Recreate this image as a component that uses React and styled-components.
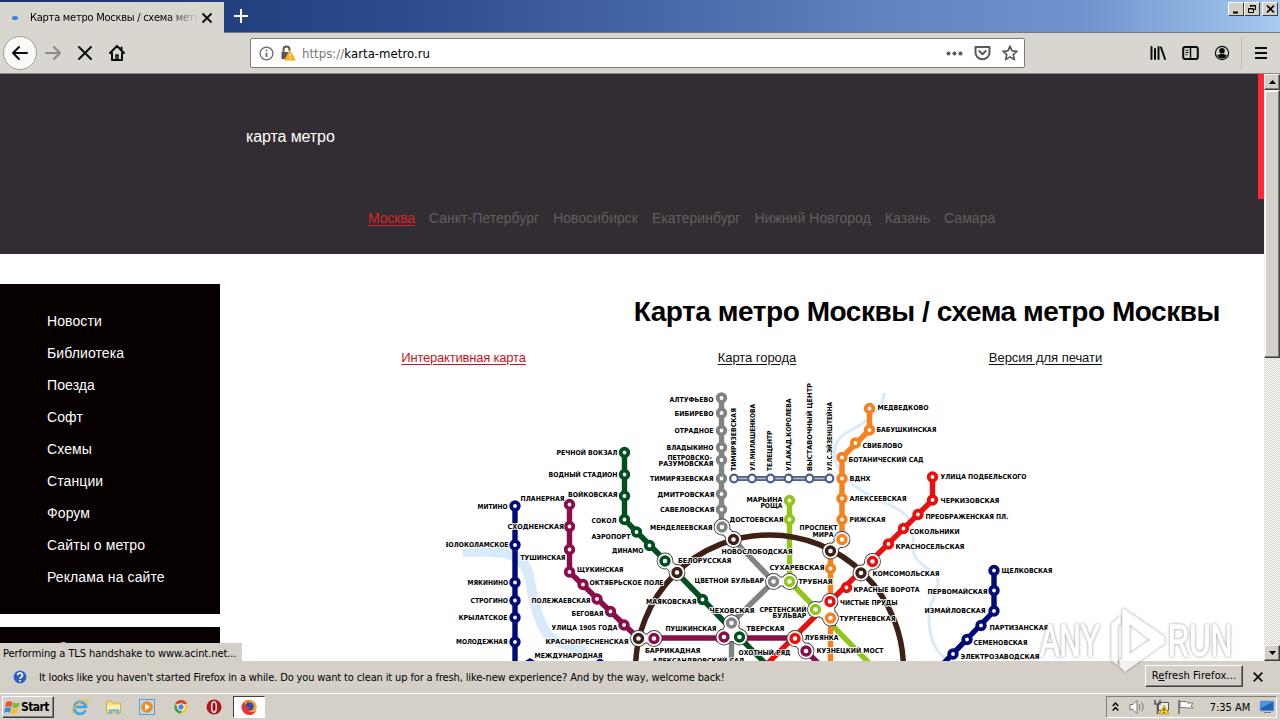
import styled, { createGlobalStyle } from "styled-components";

const GlobalStyle = createGlobalStyle`
    * { box-sizing: border-box; }
    body {
        margin: 0;
        overflow: hidden;
        background: #ffffff;
    }
`

const UI = `"DejaVu Sans Condensed", "DejaVu Sans", sans-serif`
const ARIAL = `"Liberation Sans", Arial, sans-serif`

const cidades = ["Москва", "Санкт-Петербург", "Новосибирск", "Екатеринбург", "Нижний Новгород", "Казань", "Самара"]
const menu = ["Новости", "Библиотека", "Поезда", "Софт", "Схемы", "Станции", "Форум", "Сайты о метро", "Реклама на сайте"]

// color, path points, plain stations
const lines = [
    { color: "#000a78", points: "515,506 515,670", stops: [[515, 506], [515, 545], [515, 582.5], [515, 600.5], [515, 617.5], [515, 642]] },
    { color: "#8a0e49", points: "569.5,504.5 569.5,572 638,638 795,638 806,651 818,663", stops: [[569.5, 504.5], [569.5, 526.5], [569.5, 549.5], [569.5, 572], [583, 584.5], [597, 599], [610.5, 611.5], [624, 625]] },
    { color: "#808482", points: "721.5,398 721.5,527 773.5,581.5 731.5,623 731.5,670", stops: [[721.5, 398], [721.5, 413], [721.5, 430.5], [721.5, 447.5], [721.5, 460], [721.5, 478.5], [721.5, 494], [721.5, 509.5]] },
    { color: "#00501f", points: "624.5,452.5 624.5,519.5 665,560.5 739.5,637.5 766,664", stops: [[624.5, 452.5], [624.5, 474.5], [624.5, 496], [624.5, 519.5], [636.5, 532], [649.5, 545.5], [702.5, 599.5]] },
    { color: "#93c61c", points: "789.5,500.5 789.5,581.5 870,664", stops: [[789.5, 500.5], [789.5, 519.5]] },
    { color: "#f5821f", points: "869.5,408.5 869.5,430 842,457.5 842,539.5 830.5,551 830.5,670", stops: [[869.5, 408.5], [869.5, 430], [855.5, 443], [842, 457.5], [842, 478.5], [842, 498.5], [842, 519.5], [830.5, 568.5]] },
    { color: "#e8110f", points: "932.5,477 932.5,500 767,664", stops: [[932.5, 477], [932.5, 500], [918, 514.5], [903.5, 528.5], [888.5, 544], [846.5, 587.5]] },
    { color: "#000a78", points: "994,570.5 994,611 942,665", stops: [[994, 570.5], [994, 590.5], [994, 611], [981, 625.5], [967, 639.5], [953, 654]] },
]

const monorail = [734, 752, 770.5, 788.5, 809.5, 829.5]

const hubs = [
    [[722, 527, "#808482"], [733.5, 539.5, "#3e2017"]],
    [[665, 561, "#00501f"], [677, 572.5, "#3e2017"]],
    [[773.5, 581.5, "#808482"], [789.5, 581.5, "#93c61c"]],
    [[842, 539.5, "#f5821f"], [830.5, 551, "#3e2017"]],
    [[872.5, 561.5, "#e8110f"], [861, 573, "#3e2017"]],
    [[830, 601.5, "#e8110f"], [815.5, 609.5, "#93c61c"], [830.5, 618, "#f5821f"]],
    [[731.5, 623, "#808482"], [724, 637, "#8a0e49"], [739.5, 637, "#00501f"]],
    [[638.5, 638.5, "#3e2017"], [654, 638.5, "#8a0e49"]],
    [[795, 638.5, "#e8110f"], [806, 651, "#8a0e49"]],
]

// text, left, right, middle
const labels = [
    ["МИТИНО", 477.5, 507.5, 506.5],
    ["ПЛАНЕРНАЯ", 520.5, 564.5, 498.5],
    ["СХОДНЕНСКАЯ", 507.5, 564, 526.5],
    ["ВОЛОКОЛАМСКОЕ", 444, 508.5, 544.5],
    ["ТУШИНСКАЯ", 520.5, 565.5, 557.5],
    ["РЕЧНОЙ ВОКЗАЛ", 556.5, 617.5, 452.5],
    ["ВОДНЫЙ СТАДИОН", 548.5, 617.5, 474.5],
    ["ВОЙКОВСКАЯ", 568, 617.5, 494.5],
    ["СОКОЛ", 591.5, 616.5, 520.5],
    ["АЭРОПОРТ", 591.5, 630.5, 536.5],
    ["ДИНАМО", 612, 643.5, 550.5],
    ["ЩУКИНСКАЯ", 577, 623.5, 569.5],
    ["ОКТЯБРЬСКОЕ ПОЛЕ", 589.5, 663.5, 582.5],
    ["МЯКИНИНО", 467.5, 508, 582.5],
    ["СТРОГИНО", 470.5, 508, 600.5],
    ["КРЫЛАТСКОЕ", 458.5, 507.5, 617.5],
    ["МОЛОДЕЖНАЯ", 456, 507.5, 641.5],
    ["ПОЛЕЖАЕВСКАЯ", 531.5, 590.5, 600.5],
    ["БЕГОВАЯ", 571.5, 603.5, 613.5],
    ["УЛИЦА 1905 ГОДА", 551.5, 617.5, 627.5],
    ["КРАСНОПРЕСНЕНСКАЯ", 545.5, 628.5, 641.5],
    ["МЕЖДУНАРОДНАЯ", 534.5, 602.5, 655.5],
    ["АЛТУФЬЕВО", 669.5, 713.5, 399.5],
    ["БИБИРЕВО", 674.5, 713.5, 413.5],
    ["ОТРАДНОЕ", 674.5, 713.5, 430.5],
    ["ВЛАДЫКИНО", 666.5, 713.5, 447.5],
    ["ПЕТРОВСКО-", 667.5, 712, 457.5],
    ["РАЗУМОВСКАЯ", 658.5, 713.5, 463.5],
    ["ТИМИРЯЗЕВСКАЯ", 650, 713.5, 478.5],
    ["ДМИТРОВСКАЯ", 657.5, 714.5, 494.5],
    ["САВЕЛОВСКАЯ", 660, 714.5, 509.5],
    ["МЕНДЕЛЕЕВСКАЯ", 650, 712.5, 527.5],
    ["МАРЬИНА", 746.5, 782.5, 499.5],
    ["РОЩА", 760.5, 782.5, 505.5],
    ["ДОСТОЕВСКАЯ", 729.5, 783.5, 519.5],
    ["ПРОСПЕКТ", 799.5, 837.5, 527.5],
    ["МИРА", 812.5, 833.5, 534.5],
    ["НОВОСЛОБОДСКАЯ", 721.5, 792.5, 551.5],
    ["БЕЛОРУССКАЯ", 678, 731.5, 560.5],
    ["СУХАРЕВСКАЯ", 769.5, 824.5, 567.5],
    ["ЦВЕТНОЙ БУЛЬВАР", 694.5, 764, 580.5],
    ["ТРУБНАЯ", 798.5, 832.5, 581.5],
    ["МАЯКОВСКАЯ", 646, 696.5, 601.5],
    ["ЧЕХОВСКАЯ", 709.5, 754.5, 610.5],
    ["СРЕТЕНСКИЙ", 759.5, 806.5, 609.5],
    ["БУЛЬВАР", 772.5, 806.5, 615.5],
    ["ПУШКИНСКАЯ", 665.5, 716.5, 628.5],
    ["ТВЕРСКАЯ", 746.5, 784.5, 628.5],
    ["ЛУБЯНКА", 804.5, 838.5, 637.5],
    ["БАРРИКАДНАЯ", 645, 700.5, 650.5],
    ["ОХОТНЫЙ РЯД", 738.5, 790.5, 652.5],
    ["АЛЕКСАНДРОВСКИЙ САД", 652.5, 744.5, 660.5],
    ["КУЗНЕЦКИЙ МОСТ", 816.5, 883.5, 650.5],
    ["МЕДВЕДКОВО", 877.5, 928.5, 407.5],
    ["БАБУШКИНСКАЯ", 876.5, 936.5, 429.5],
    ["СВИБЛОВО", 862.5, 902.5, 445.5],
    ["БОТАНИЧЕСКИЙ САД", 848.5, 923.5, 459.5],
    ["ВДНХ", 849.5, 870.5, 478.5],
    ["АЛЕКСЕЕВСКАЯ", 849.5, 906.5, 498.5],
    ["РИЖСКАЯ", 849.5, 885.5, 519.5],
    ["УЛИЦА ПОДБЕЛЬСКОГО", 940.5, 1026.5, 476.5],
    ["ЧЕРКИЗОВСКАЯ", 940.5, 999.5, 500.5],
    ["ПРЕОБРАЖЕНСКАЯ ПЛ.", 925.5, 1008.5, 516.5],
    ["СОКОЛЬНИКИ", 909.5, 959.5, 531.5],
    ["КРАСНОСЕЛЬСКАЯ", 895.5, 964.5, 546.5],
    ["КОМСОМОЛЬСКАЯ", 872.5, 939.5, 573.5],
    ["КРАСНЫЕ ВОРОТА", 853.5, 919.5, 589.5],
    ["ЧИСТЫЕ ПРУДЫ", 840, 897.5, 602.5],
    ["ТУРГЕНЕВСКАЯ", 839.5, 895.5, 618.5],
    ["ЩЕЛКОВСКАЯ", 1001.5, 1052.5, 570.5],
    ["ПЕРВОМАЙСКАЯ", 927.5, 987.5, 591.5],
    ["ИЗМАЙЛОВСКАЯ", 924.5, 985.5, 610.5],
    ["ПАРТИЗАНСКАЯ", 989.5, 1048.5, 627.5],
    ["СЕМЕНОВСКАЯ", 973.5, 1027.5, 642.5],
    ["ЭЛЕКТРОЗАВОДСКАЯ", 960.5, 1039.5, 656.5],
]

// text, middle, top
const verticalLabels = [
    ["ТИМИРЯЗЕВСКАЯ", 733.5, 408],
    ["УЛ.МИЛАШЕНКОВА", 752.5, 404],
    ["ТЕЛЕЦЕНТР", 769.5, 430.5],
    ["УЛ.АКАД.КОРОЛЕВА", 788.5, 398.5],
    ["ВЫСТАВОЧНЫЙ ЦЕНТР", 809.5, 383],
    ["УЛ.С.ЭЙЗЕНШТЕЙНА", 829.5, 402],
]

function MetroMap() {
    return (
        <Map viewBox="446 380 614 290">
            <path d="M463 549 C480 548 498 546 510 548 C527 553 533 566 535 580 C538 602 543 618 553 633 C564 641 578 643 587 647 L584 654 C568 652 552 646 543 637 C533 622 528 600 526 585 C522 567 516 560 503 558 C490 556 476 557 463 557z" fill="#d9ebfa" />
            <path d="M884 393 C884 412 862 425 846 433 C831 442 832 460 841 472 C852 488 872 497 890 505 C911 515 914 524 913 545 C912 566 932 565 938 580 C938 598 928 600 929 621 C930 642 938 655 950 662" fill="none" stroke="#d9ebfa" strokeWidth="3" />
            {lines.map((l, i) => <polyline key={i} points={l.points} fill="none" stroke={l.color} strokeWidth="5.4" strokeLinejoin="round" />)}
            <circle cx="769.5" cy="669" r="134" fill="none" stroke="#3e2017" strokeWidth="5.5" />
            <path d="M734 478.5H830" stroke="#52607e" strokeWidth="5" />
            <path d="M734 478.5H830" stroke="#b4bccb" strokeWidth="1.4" />
            {monorail.map(x => <circle key={x} cx={x} cy="478.5" r="3.8" fill="#ffffff" stroke="#4b5f8f" strokeWidth="2.2" />)}
            {lines.map(l => l.stops.map(([x, y]) => (
                <circle key={`${x}-${y}`} cx={x} cy={y} r="3.8" fill="#ffffff" stroke={l.color} strokeWidth="3.8" />
            )))}
            {hubs.map((hub, i) => {
                const d = "M" + hub.map(([x, y]) => `${x} ${y}`).join("L") + "Z"
                return (
                    <g key={i}>
                        {hub.map(([x, y], n) => <circle key={n} cx={x} cy={y} r="8.4" fill="#444444" />)}
                        <path d={d} stroke="#444444" strokeWidth="10" />
                        <path d={d} stroke="#ffffff" fill="#ffffff" strokeWidth="8" />
                        {hub.map(([x, y], n) => <circle key={n} cx={x} cy={y} r="7.5" fill="#ffffff" />)}
                        {hub.map(([x, y, c], n) => <circle key={n} cx={x} cy={y} r="4" fill="#ffffff" stroke={c} strokeWidth="3.4" />)}
                    </g>
                )
            })}
            <path d="M525 661l5-3 5 3zM596 661l4-3 4 3z" fill="#000a78" />
            {labels.map(([text, x1, x2, y]) => (
                <StationName key={text + y} x={x1} y={y + 2.5} textLength={x2 - x1} lengthAdjust="spacingAndGlyphs">{text}</StationName>
            ))}
            {verticalLabels.map(([text, x, top]) => (
                <StationName key={x} transform={`translate(${x + 2.5} 471) rotate(-90)`} textLength={471 - top} lengthAdjust="spacingAndGlyphs">{text}</StationName>
            ))}
        </Map>
    )
}

function Watermark() {
    return (
        <WatermarkArt viewBox="0 0 210 70">
            <text x="9" y="50" textLength="60" lengthAdjust="spacingAndGlyphs">ANY</text>
            <text x="137" y="50" textLength="64" lengthAdjust="spacingAndGlyphs">RUN</text>
            <path d="M81 18l8-7v6l-3 3v38l-5-4z" />
            <path fillRule="evenodd" d="M92 3L133 31V37L94 65L89 60V55L120 34L98 17V48L92 52z" />
        </WatermarkArt>
    )
}

export default function App() {
    return (
        <Screen>
            <GlobalStyle />

            <TitleBar>
                <Tab>
                    <Dot />
                    <TabTitle>Карта метро Москвы / схема метро</TabTitle>
                    <svg width="12" height="12" viewBox="0 0 12 12" stroke="#111" strokeWidth="2"><path d="M1.5 1.5l9 9M10.5 1.5l-9 9" /></svg>
                </Tab>
                <NewTab width="14" height="14" viewBox="0 0 14 14" stroke="#fff" strokeWidth="2"><path d="M7 0v14M0 7h14" /></NewTab>
                <WindowButtons>
                    <WindowButton><svg width="15" height="13"><path d="M4 9.5h5" stroke="#000" strokeWidth="2" /></svg></WindowButton>
                    <WindowButton $gap><svg width="15" height="13" fill="none" stroke="#000"><path d="M5.5 4V2.5h5v4H9M5.5 3h5M3.5 5.5h5v4h-5zM3.5 6h5" /></svg></WindowButton>
                    <WindowButton><svg width="15" height="13" stroke="#000" strokeWidth="1.6"><path d="M4 2.5l7 7M11 2.5l-7 7" /></svg></WindowButton>
                </WindowButtons>
            </TitleBar>

            <Toolbar>
                <BackButton><svg width="18" height="18" viewBox="0 0 18 18" fill="none" stroke="#0c0c0d" strokeWidth="2" strokeLinecap="round" strokeLinejoin="round"><path d="M16 9H2M8 3L2 9l6 6" /></svg></BackButton>
                <ToolButton $width={32}><svg width="18" height="18" viewBox="0 0 18 18" fill="none" stroke="#8b8984" strokeWidth="2" strokeLinecap="round" strokeLinejoin="round"><path d="M2 9h14M10 3l6 6-6 6" /></svg></ToolButton>
                <ToolButton $width={32}><svg width="16" height="16" viewBox="0 0 16 16" stroke="#0c0c0d" strokeWidth="2" strokeLinecap="round"><path d="M2 2l12 12M14 2L2 14" /></svg></ToolButton>
                <ToolButton $width={32}><svg width="16" height="16" viewBox="0 0 16 16" fill="none" stroke="#0c0c0d" strokeWidth="2" strokeLinecap="round" strokeLinejoin="round"><path d="M1 8l7-7 7 7M3 8v7h10V8" /><path d="M7 14v-4h2v4" strokeWidth="1.5" /><path d="M12.5 2.5v2" /></svg></ToolButton>
                <UrlBar>
                    <svg width="15" height="15" viewBox="0 0 15 15" fill="none" stroke="#666" strokeWidth="1.2"><circle cx="7.5" cy="7.5" r="6.4" /><path d="M7.5 6.5v4.5M7.5 3.7v1.6" strokeWidth="1.7" /></svg>
                    <svg width="16" height="16" viewBox="0 0 16 16"><path d="M3.5 8V4.5a3 3 0 0 1 6 0V6" fill="none" stroke="#58585a" strokeWidth="2" /><path d="M1.5 7h8v7h-8z" fill="#58585a" /><path d="M9.8 5.5L15.2 15H4.8z" fill="#f9b017" stroke="#f9b017" strokeLinejoin="round" /><path d="M9.9 8.5v3M9.9 12.6v1.2" stroke="#fff" strokeWidth="1.2" /></svg>
                    <Url><span>https://</span>karta-metro.ru</Url>
                    <svg width="17" height="5" fill="#5a5a5c"><circle cx="2.5" cy="2.5" r="2" /><circle cx="8.5" cy="2.5" r="2" /><circle cx="14.5" cy="2.5" r="2" /></svg>
                    <svg width="17" height="16" viewBox="0 0 17 16" fill="none" stroke="#5a5a5c" strokeWidth="2" strokeLinejoin="round" strokeLinecap="round"><path d="M1.5 2h14v5.5a7 6.7 0 0 1-14 0z" /><path d="M5.3 6l3.2 3.2L11.7 6" /></svg>
                    <svg width="16" height="16" viewBox="0 0 16 16" fill="none" stroke="#5a5a5c" strokeWidth="1.7" strokeLinejoin="round"><path d="M8 1.2l2 4.7 5 .4-3.8 3.3 1.2 5L8 11.9l-4.4 2.7 1.2-5L1 6.3l5-.4z" /></svg>
                </UrlBar>
                <ToolButton $width={32}><svg width="16" height="14" viewBox="0 0 16 14" stroke="#0c0c0d" strokeWidth="2" strokeLinecap="round"><path d="M1.5 1v12M5 3v10M8.5 1v12M11 1.5l4 11.5" /></svg></ToolButton>
                <ToolButton $width={32}><svg width="17" height="14" viewBox="0 0 17 14" fill="none" stroke="#0c0c0d" strokeWidth="2"><rect x="1.2" y="1" width="14.6" height="12" rx="2" /><path d="M8.5 1v12" strokeWidth="1.5" /><path d="M3.5 4.2h3M3.5 6.5h3M3.5 8.8h2" strokeWidth="1" /></svg></ToolButton>
                <ToolButton $width={32}><svg width="16" height="16" viewBox="0 0 16 16"><circle cx="8" cy="8" r="6.6" fill="none" stroke="#0c0c0d" strokeWidth="1.2" /><circle cx="8" cy="5.8" r="2.8" fill="#0c0c0d" /><path d="M3.2 10.6c2-2 7.6-2 9.6 0a5.4 5.4 0 0 1-9.6 0z" fill="#0c0c0d" /></svg></ToolButton>
                <Separator />
                <ToolButton $width={38}><svg width="12" height="12" stroke="#0c0c0d" strokeWidth="2"><path d="M0 1h12M0 6h12M0 11h12" /></svg></ToolButton>
            </Toolbar>

            <Viewport>
                <Page>
                    <Header>
                        <SiteName>карта метро</SiteName>
                        <Cities>{cidades.map((c, i) => <City key={c} $active={i === 0}>{c}</City>)}</Cities>
                        <RedStripe />
                    </Header>
                    <Columns>
                        <Aside>
                            <SideMenu>{menu.map(m => <li key={m}>{m}</li>)}</SideMenu>
                            <SideBox>О</SideBox>
                        </Aside>
                        <Main>
                            <Title>Карта метро Москвы / схема метро Москвы</Title>
                            <MapLinks>
                                <MapLink $active>Интерактивная карта</MapLink>
                                <MapLink>Карта города</MapLink>
                                <MapLink>Версия для печати</MapLink>
                            </MapLinks>
                            <MetroMap />
                        </Main>
                    </Columns>
                </Page>
                <Scrollbar>
                    <ScrollButton><svg width="7" height="4"><path d="M3.5 0L7 4H0z" /></svg></ScrollButton>
                    <Thumb />
                    <Track />
                    <ScrollButton><svg width="7" height="4"><path d="M0 0h7L3.5 4z" /></svg></ScrollButton>
                </Scrollbar>
                <Status>Performing a TLS handshake to www.acint.net...</Status>
            </Viewport>

            <Notification>
                <svg width="16" height="16" viewBox="0 0 16 16"><circle cx="8" cy="8" r="7" fill="#2f5cc0" stroke="#c8d2e8" strokeWidth="1.2" /><path d="M5.6 6.2a2.4 2.2 0 1 1 3.4 2c-.8.4-1 .7-1 1.5M8 11v1.7" fill="none" stroke="#fff" strokeWidth="1.7" /></svg>
                <Message>It looks like you haven't started Firefox in a while. Do you want to clean it up for a fresh, like-new experience? And by the way, welcome back!</Message>
                <RefreshButton>R<u>e</u>fresh Firefox...</RefreshButton>
                <svg width="10" height="10" viewBox="0 0 10 10" stroke="#111" strokeWidth="1.8"><path d="M.7.7l8.6 8.6M9.3.7L.7 9.3" /></svg>
            </Notification>

            <Taskbar>
                <StartButton>
                    <svg width="17" height="17" viewBox="0 0 16 16"><path d="M2 3q3-2 6 0L7 7.5q-3-1.500-6 0z" fill="#e4572a" /><path d="M8.800 3.300q3 1.500 6 0l-1.300 4.500q-3 1.500-5.700 0z" fill="#7cb83a" /><path d="M.8 8.500q3-1.700 5.900 0l-1.200 4.700q-3-1.700-5.500 0z" fill="#3f8cd8" /><path d="M7.500 8.800q3 1.500 5.700 0L12 13.500q-3 1.500-5.700 0z" fill="#f6c128" /></svg>
                    Start
                </StartButton>
                <QuickLaunch>
                    <svg width="18" height="18" viewBox="0 0 18 18" fill="none"><path d="M14.500 12.500A6 6 0 1 1 15 9H5" stroke="#3aa4e0" strokeWidth="2.600" /><path d="M2 15.500C-1 11 12-1 16.500 2.500c1 1 .5 2.500-.5 4" stroke="#e9bd3c" strokeWidth="1.300" /></svg>
                    <svg width="18" height="18" viewBox="0 0 18 18"><path d="M1.500 3h5l1 2h8v10h-14z" fill="#f3da80" stroke="#cfae4c" /><path d="M2 7h13v4H2z" fill="#fbf0b5" /><path d="M4 16v-4.500h10V16h-2.500v-2.500h-5V16z" fill="#63b4e2" /></svg>
                    <svg width="18" height="18" viewBox="0 0 18 18"><rect x="1.500" y="1.500" width="15" height="15" fill="#b8d9ef" stroke="#5f9fcb" /><circle cx="9" cy="9" r="5.800" fill="#f28a1c" /><path d="M7 5.700l5.200 3.300L7 12.300z" fill="#fff" /></svg>
                    <svg width="18" height="18" viewBox="0 0 18 18"><circle cx="9" cy="9" r="6.700" fill="#f7ca2f" /><path d="M3 6a6.700 6.700 0 0 1 12.200 0H9z" fill="#e0402f" /><path d="M3 6a6.700 6.700 0 0 0 5.500 9.600L11 10.500 6 10z" fill="#31a252" /><circle cx="9" cy="9" r="3.200" fill="#4a86e8" stroke="#fff" strokeWidth="1.100" /></svg>
                    <svg width="18" height="18" viewBox="0 0 18 18"><circle cx="9" cy="9" r="7.500" fill="#b3141c" /><ellipse cx="9" cy="9" rx="2.300" ry="5.200" fill="#8b0e14" stroke="#f4e8e8" strokeWidth="1.600" /></svg>
                </QuickLaunch>
                <TaskButton>
                    <svg width="18" height="18" viewBox="0 0 18 18"><circle cx="9" cy="9.500" r="7.500" fill="#f26a26" /><path d="M4 2l3 3 4-3 5 5c1 5-2 10-7 10z" fill="#f9a928" /><circle cx="9.500" cy="8.500" r="4.300" fill="#2c4fa8" /><path d="M1.600 7q0 9 8 9.800 4.500 0 6.600-4-4.700 3-8.200-.3l2-2.500L5 7.500 4 4z" fill="#e53440" /></svg>
                </TaskButton>
                <Tray>
                    <svg width="7" height="10" viewBox="0 0 7 10" fill="none" stroke="#000" strokeWidth="1.400"><path d="M.7 4L3.500 1l2.800 3M.7 8.500l2.800-3 2.800 3" /></svg>
                    <svg width="17" height="16" viewBox="0 0 17 16" fill="#fff" stroke="#777"><path d="M1 5.500h3l4-4v13l-4-4H1z" /><path d="M10 5q2 3 0 6M12.500 3.500q3.500 4.500 0 9" fill="none" /></svg>
                    <svg width="17" height="16" viewBox="0 0 17 16"><path d="M5.500 3.500h10v8h-10z" fill="#eee" stroke="#555" /><path d="M2 1v4h5V1M4.500 5v10" fill="none" stroke="#555" strokeWidth="1.500" /><path d="M11 6l5 9H6z" fill="#f6cf20" stroke="#a58500" strokeWidth=".6" /><path d="M11 9v3M11 13v1" stroke="#000" /></svg>
                    <svg width="17" height="16" viewBox="0 0 17 16"><path d="M2 1v14" stroke="#777" strokeWidth="1.800" /><path d="M3 2.500h6l1.500 1.500H16l-2 3 2 2H9.500L8 8.500H3z" fill="#fff" stroke="#777" /></svg>
                    <Clock>7:35 AM</Clock>
                    <svg width="16" height="14" viewBox="0 0 16 14"><path d="M1 1h14v10H1z" fill="#1c62b8" stroke="#9ab4d4" /><path d="M2 2h12L2 8z" fill="#4f95df" /><path d="M5 12.500h7" stroke="#777" /></svg>
                </Tray>
            </Taskbar>

            <Watermark />
        </Screen>
    )
}

const Screen = styled.div`
    position: relative;
    display: flex;
    flex-direction: column;
    width: 1280px;
    height: 720px;
    overflow: hidden;
    font-family: ${UI};
    font-size: 11px;
    color: #000000;
`
const TitleBar = styled.div`
    display: flex;
    align-items: flex-start;
    height: 33px;
    flex-shrink: 0;
    padding-top: 2px;
    border-bottom: 1px solid #737a88;
    background: linear-gradient(90deg, #17336f 0, #21407f 220px, #2c4b8e 400px, #4465a6 640px, #6385c2 900px, #6f93cc 1080px, #8fb4e2 1200px, #a6caf0 1280px);
`
const Tab = styled.div`
    display: flex;
    align-items: center;
    width: 224px;
    height: 31px;
    padding: 0 11px 0 12px;
    background: #d9d6d0;
    flex-shrink: 0;
`
const Dot = styled.div`
    width: 6px;
    height: 4px;
    border-radius: 50%;
    background: #2f86e8;
    margin-right: 12px;
`
const TabTitle = styled.div`
    flex: 1;
    overflow: hidden;
    white-space: nowrap;
    margin-right: 4px;
    letter-spacing: -0.25px;
    mask-image: linear-gradient(90deg, #000 138px, transparent 168px);
`
const NewTab = styled.svg`
    margin: 7px 0 0 10px;
`
const WindowButtons = styled.div`
    display: flex;
    margin-left: auto;
    padding-right: 2px;
`
const WindowButton = styled.div`
    width: 16px;
    height: 14px;
    overflow: hidden;
    margin-right: ${p => p.$gap ? 2 : 0}px;
    background: #d4d0c8;
    border: 1px solid;
    border-color: #ffffff #404040 #404040 #ffffff;

    svg {
        display: block;
    }
`
const Toolbar = styled.div`
    display: flex;
    align-items: center;
    height: 41px;
    flex-shrink: 0;
    padding-left: 3px;
    background: #d9d6d0;
    border-bottom: 1px solid #8a8784;
`
const BackButton = styled.div`
    display: flex;
    align-items: center;
    justify-content: center;
    width: 34px;
    height: 34px;
    border-radius: 50%;
    border: 1px solid #a09d98;
    background: #f9f9f8;
    flex-shrink: 0;
`
const ToolButton = styled.div`
    display: flex;
    align-items: center;
    justify-content: center;
    width: ${p => p.$width}px;
    height: 32px;
    flex-shrink: 0;
`
const UrlBar = styled.div`
    display: flex;
    align-items: center;
    width: 775px;
    height: 30px;
    margin: 0 117px;
    padding: 0 6px 0 8px;
    background: #ffffff;
    border: 1px solid #7d7b78;
    border-radius: 2px;
    flex-shrink: 0;

    svg {
        margin-right: 6px;
    }
    svg:nth-of-type(3), svg:nth-of-type(4) {
        margin-right: 11px;
    }
    svg:last-child {
        margin-right: 0;
    }
`
const Url = styled.div`
    flex: 1;
    font-size: 13px;
    letter-spacing: 0.05px;

    span {
        color: #777777;
    }
`
const Separator = styled.div`
    width: 1px;
    height: 32px;
    margin-left: 3px;
    background: #c2beb8;
`
const Viewport = styled.div`
    position: relative;
    display: flex;
    height: 587px;
    flex-shrink: 0;
    overflow: hidden;
`
const Page = styled.div`
    width: 1264px;
    background: #ffffff;
    font-family: ${ARIAL};
    overflow: hidden;
`
const Header = styled.div`
    position: relative;
    display: flex;
    flex-direction: column;
    height: 180px;
    padding-top: 53px;
    background: #322d32;
`
const SiteName = styled.div`
    padding-left: 246px;
    font-size: 16px;
    line-height: 20px;
    letter-spacing: -0.1px;
    color: #ffffff;
`
const Cities = styled.div`
    display: flex;
    gap: 14px;
    margin: 63px 0 0 368px;
    font-size: 14px;
    line-height: 16px;
`
const City = styled.span`
    color: ${p => p.$active ? "#dc2129" : "#625e61"};
    text-decoration: ${p => p.$active ? "underline" : "none"};
    text-underline-offset: 2px;
    letter-spacing: ${p => p.$active ? "-0.15px" : "0.03px"};
`
const RedStripe = styled.div`
    position: absolute;
    top: 0;
    right: 0;
    width: 6px;
    height: 125px;
    background: #fb2a35;
`
const Columns = styled.div`
    display: flex;
    padding-top: 30px;
`
const Aside = styled.div`
    display: flex;
    flex-direction: column;
    gap: 13px;
    width: 220px;
    flex-shrink: 0;
    color: #ffffff;
    font-size: 14px;
`
const SideMenu = styled.ul`
    height: 330px;
    margin: 0;
    padding: 21px 0 0 47px;
    list-style: none;
    letter-spacing: 0.1px;
    background: #060001;

    li {
        height: 32px;
        line-height: 32px;
    }
`
const SideBox = styled.div`
    height: 60px;
    padding: 12px 0 0 58px;
    color: #a8a4a5;
    background: #060001;
`
const Main = styled.div`
    width: 1044px;
    height: 377px;
    overflow: hidden;
`
const Title = styled.h1`
    margin: 0;
    padding: 11px 44px 0 0;
    text-align: right;
    font-size: 28px;
    line-height: 34px;
    letter-spacing: -0.45px;
    white-space: nowrap;
`
const MapLinks = styled.div`
    display: grid;
    grid-template-columns: 293px 294px 283px;
    margin: 21px 0 0 97px;
    text-align: center;
`
const MapLink = styled.span`
    font-size: 13px;
    line-height: 16px;
    text-decoration: underline;
    text-underline-offset: 2px;
    letter-spacing: ${p => p.$active ? "-0.2px" : "-0.05px"};
    color: ${p => p.$active ? "#c5171f" : "#111111"};
`
const Map = styled.svg`
    display: block;
    width: 614px;
    height: 290px;
    margin: 14px 0 0 226px;
`
const StationName = styled.text`
    font-family: "DejaVu Sans Condensed", "DejaVu Sans", sans-serif;
    font-size: 6.8px;
    font-weight: bold;
    fill: #000000;
    stroke: #ffffff;
    stroke-width: 1.6px;
    paint-order: stroke;
`
const Scrollbar = styled.div`
    display: flex;
    flex-direction: column;
    width: 16px;
`
const ScrollButton = styled.div`
    display: flex;
    align-items: center;
    justify-content: center;
    height: 16px;
    background: #d4d0c8;
    border: 1px solid;
    border-color: #f4f2ee #404040 #404040 #f4f2ee;
    box-shadow: inset -1px -1px #808080;
`
const Thumb = styled.div`
    height: 268px;
    background: #d4d0c8;
    border: 1px solid;
    border-color: #f4f2ee #404040 #404040 #f4f2ee;
    box-shadow: inset -1px -1px #808080, inset 1px 1px #ffffff;
`
const Track = styled.div`
    flex: 1;
    background: repeating-conic-gradient(#d4d0c8 0 25%, #ffffff 0 50%) 0 0 / 2px 2px;
`
const Status = styled.div`
    position: absolute;
    left: 0;
    bottom: 0;
    width: 242px;
    height: 18px;
    padding-left: 3px;
    line-height: 21px;
    white-space: nowrap;
    letter-spacing: -0.08px;
    background: #d4d0c8;
`
const Notification = styled.div`
    display: flex;
    align-items: center;
    height: 32px;
    flex-shrink: 0;
    padding: 0 17px 0 12px;
    background: #d4d0c8;
`
const Message = styled.div`
    flex: 1;
    margin-left: 11px;
    white-space: nowrap;
    letter-spacing: -0.135px;
`
const RefreshButton = styled.div`
    width: 98px;
    height: 22px;
    margin: 0 10px 2px 0;
    text-align: center;
    line-height: 20px;
    white-space: nowrap;
    letter-spacing: 0.1px;
    background: #d4d0c8;
    border: 1px solid;
    border-color: #ffffff #404040 #404040 #ffffff;
    box-shadow: inset -1px -1px #808080;
`
const Taskbar = styled.div`
    display: flex;
    align-items: center;
    height: 27px;
    padding: 1px 3px 0 2px;
    background: #d4d0c8;
    box-shadow: inset 0 1px #ffffff;
`
const StartButton = styled.div`
    display: flex;
    align-items: center;
    width: 52px;
    height: 22px;
    padding-left: 1px;
    font-size: 12px;
    font-weight: bold;
    letter-spacing: -0.6px;
    border: 1px solid;
    border-color: #ffffff #404040 #404040 #ffffff;
    box-shadow: inset -1px -1px #808080;
`
const QuickLaunch = styled.div`
    display: flex;
    gap: 15.6px;
    margin-left: 17px;
`
const TaskButton = styled.div`
    display: flex;
    align-items: center;
    justify-content: center;
    width: 32px;
    height: 22px;
    margin-left: 10px;
    background: #ffffff;
    border: 1px solid;
    border-color: #404040 #ffffff #ffffff #404040;
`
const Tray = styled.div`
    display: flex;
    align-items: center;
    width: 171px;
    height: 22px;
    margin-left: auto;
    padding: 0 0 0 5px;
    border: 1px solid;
    border-color: #808080 #ffffff #ffffff #808080;

    svg {
        margin-right: 7px;
        flex-shrink: 0;
    }
    svg:first-child {
        margin-right: 10px;
    }
    svg:last-child {
        margin-right: 1px;
    }
`
const Clock = styled.div`
    flex: 1;
    text-align: center;
    white-space: nowrap;
`
const WatermarkArt = styled.svg`
    position: absolute;
    left: 1031px;
    top: 606px;
    width: 210px;
    height: 70px;
    opacity: 0.72;
    fill: #ffffff;
    stroke: #ffffff;
    stroke-width: 1.4px;
    stroke-linejoin: round;
    filter: drop-shadow(0 0 1.5px rgba(0, 0, 0, 0.45)) drop-shadow(0 0 1px rgba(0, 0, 0, 0.15));

    text {
        font-family: ${ARIAL};
        font-size: 45px;
    }
`
